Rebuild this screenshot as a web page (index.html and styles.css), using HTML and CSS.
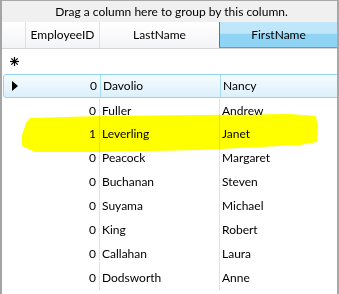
FILE: index.html
```html
<!DOCTYPE html>
<html lang="en">
<head>
    <meta charset="UTF-8">
    <title>Employees Grid</title>
    <link rel="stylesheet" href="styles.css">
</head>
<body>
    <div class="grid">
        <div class="group-panel">Drag a column here to group by this column.</div>

        <div class="header">
            <div class="cell indicator"></div>
            <div class="cell col-id">EmployeeID</div>
            <div class="cell col-last">LastName</div>
            <div class="cell col-first hot">FirstName</div>
        </div>

        <div class="new-row">
            <div class="indicator">
                <svg width="9" height="9" viewBox="0 0 9 9">
                    <g stroke="#000" stroke-width="1.2">
                        <line x1="4.5" y1="0" x2="4.5" y2="9"/>
                        <line x1="0" y1="4.5" x2="9" y2="4.5"/>
                        <line x1="1.3" y1="1.3" x2="7.7" y2="7.7"/>
                        <line x1="7.7" y1="1.3" x2="1.3" y2="7.7"/>
                    </g>
                </svg>
            </div>
        </div>

        <div class="rows">
            <div class="row selected">
                <div class="indicator">
                    <svg width="6" height="10" viewBox="0 0 6 10"><path d="M0 0 L6 5 L0 10 Z" fill="#000"/></svg>
                </div>
                <div class="cell col-id">0</div>
                <div class="cell col-last">Davolio</div>
                <div class="cell col-first">Nancy</div>
            </div>
            <div class="row">
                <div class="indicator"></div>
                <div class="cell col-id">0</div>
                <div class="cell col-last">Fuller</div>
                <div class="cell col-first">Andrew</div>
            </div>
            <div class="row">
                <div class="indicator"></div>
                <div class="cell col-id">1</div>
                <div class="cell col-last">Leverling</div>
                <div class="cell col-first">Janet</div>
            </div>
            <div class="row">
                <div class="indicator"></div>
                <div class="cell col-id">0</div>
                <div class="cell col-last">Peacock</div>
                <div class="cell col-first">Margaret</div>
            </div>
            <div class="row">
                <div class="indicator"></div>
                <div class="cell col-id">0</div>
                <div class="cell col-last">Buchanan</div>
                <div class="cell col-first">Steven</div>
            </div>
            <div class="row">
                <div class="indicator"></div>
                <div class="cell col-id">0</div>
                <div class="cell col-last">Suyama</div>
                <div class="cell col-first">Michael</div>
            </div>
            <div class="row">
                <div class="indicator"></div>
                <div class="cell col-id">0</div>
                <div class="cell col-last">King</div>
                <div class="cell col-first">Robert</div>
            </div>
            <div class="row">
                <div class="indicator"></div>
                <div class="cell col-id">0</div>
                <div class="cell col-last">Callahan</div>
                <div class="cell col-first">Laura</div>
            </div>
            <div class="row">
                <div class="indicator"></div>
                <div class="cell col-id">0</div>
                <div class="cell col-last">Dodsworth</div>
                <div class="cell col-first">Anne</div>
            </div>
        </div>

        <!-- marker scribble over the Leverling row -->
        <svg class="marker" width="339" height="294" viewBox="0 0 339 294">
            <path d="M30 118 L100 116 L200 115 L290 114 L316 116 L318 128 L317 142 L300 145 L200 150 L100 152 L35 152 L22 146 L22 135 L26 123 Z" fill="#ffff00"/>
        </svg>
    </div>
</body>
</html>
```

FILE: styles.css
```css
html, body {
    margin: 0;
    padding: 0;
    background: #fff;
}
body {
    font-family: Lato, "Open Sans", sans-serif;
    font-size: 12px;
    color: #000;
    overflow: hidden;
}
.grid {
    position: relative;
    width: 335px;
    height: 294px;
    border-left: 2px solid #a3a3a8;
    border-right: 2px solid #a8a8a8;
    overflow: hidden;
}
.group-panel {
    height: 21px;
    line-height: 21px;
    border-top: 1px solid #a8a8a8;
    background: #f0f0f0;
    text-align: center;
    padding-left: 4px;
}
.header {
    display: flex;
    height: 26px;
    border-bottom: 1px solid #d5d5d5;
    background: linear-gradient(#ffffff, #f3f4f6);
}
.header .cell {
    line-height: 26px;
    text-align: center;
    border-right: 1px solid #e2e2e2;
    box-sizing: border-box;
}
.header .indicator {
    width: 24px;
}
.col-id {
    width: 74px;
}
.col-last {
    width: 120px;
}
.col-first {
    flex: 1;
}
.header .col-first {
    border-right: none;
}
.header .hot {
    background: linear-gradient(#bfe6f9 0%, #bfe6f9 45%, #8fd4f5 50%, #8fd4f5 100%);
    border-left: 1px solid #3f80b0;
    border-bottom: 1px solid #5b9fcc;
    margin-left: -1px;
}
.new-row {
    height: 24px;
    display: flex;
}
.indicator {
    width: 24px;
    display: flex;
    align-items: center;
    padding-left: 8px;
    box-sizing: border-box;
}
.rows .row {
    display: flex;
    height: 24px;
    line-height: 24px;
}
.row .cell {
    box-sizing: border-box;
    white-space: nowrap;
}
.row .col-id {
    text-align: right;
    padding-right: 3px;
    border-right: 1px solid #e2e2e2;
}
.row .col-last {
    padding-left: 2px;
    border-right: 1px solid #e2e2e2;
}
.row .col-first {
    padding-left: 2px;
}
.row.selected {
    margin: 1px -4px 0 1px;
    height: 22px;
    line-height: 22px;
    border: 1px solid #92d5f4;
    border-radius: 3px;
    background: linear-gradient(#f6fbfe, #dbf0fb);
}
.row.selected .indicator {
    width: 23px;
    padding-left: 8px;
}
.row.selected .col-id {
    border-right-color: #a8dcf5;
}
.row.selected .col-last {
    border-right-color: #a8dcf5;
}
.row.selected + .row {
    margin-top: 1px;
    height: 23px;
}
.marker {
    position: absolute;
    left: -2px;
    top: 0;
    mix-blend-mode: multiply;
    pointer-events: none;
}
```
